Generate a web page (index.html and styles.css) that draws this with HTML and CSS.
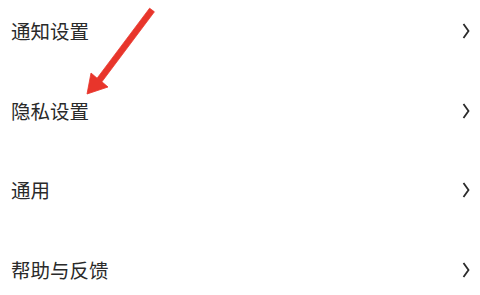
FILE: index.html
```html
<!DOCTYPE HTML>
<html>
<head>
<meta charset="utf-8">
<title>设置</title>
<link rel="stylesheet" href="styles.css">
</head>
<body>
<div id="list">
	<div class="row"><span class="label">通知设置</span><svg class="chev" width="8" height="16" viewBox="0 0 8 16"><path d="M1.5 1 L6.5 8 L1.5 15" fill="none" stroke="#2a2a2a" stroke-width="1.8"/></svg></div>
	<div class="row"><span class="label">隐私设置</span><svg class="chev" width="8" height="16" viewBox="0 0 8 16"><path d="M1.5 1 L6.5 8 L1.5 15" fill="none" stroke="#2a2a2a" stroke-width="1.8"/></svg></div>
	<div class="row"><span class="label">通用</span><svg class="chev" width="8" height="16" viewBox="0 0 8 16"><path d="M1.5 1 L6.5 8 L1.5 15" fill="none" stroke="#2a2a2a" stroke-width="1.8"/></svg></div>
	<div class="row"><span class="label">帮助与反馈</span><svg class="chev" width="8" height="16" viewBox="0 0 8 16"><path d="M1.5 1 L6.5 8 L1.5 15" fill="none" stroke="#2a2a2a" stroke-width="1.8"/></svg></div>
</div>
<svg id="arrow" width="480" height="295" viewBox="0 0 480 295">
	<path d="M149.6 8.2 L154.4 11.8 L101.9 81.8 L108 87 L87 94 L91 73 L97.1 78.2 Z" fill="#e8352b" stroke="#e8352b" stroke-width="0.8" stroke-linejoin="round"/>
</svg>
</body>
</html>
```

FILE: styles.css
```css
body {
	margin: 0px;
	padding: 0px;
	background: #ffffff;
	width: 480px;
	height: 295px;
	overflow: hidden;
}
#list {
	display: flex;
	flex-direction: column;
	gap: 59.7px;
	padding-top: 21px;
	padding-left: 11px;
	padding-right: 10px;
}
.row {
	display: flex;
	align-items: center;
	justify-content: space-between;
	height: 20px;
}
.label {
	font-family: "Noto Sans CJK SC", "Noto Sans", sans-serif;
	font-size: 19.5px;
	line-height: 20px;
	color: #2a2a2a;
}
#arrow {
	position: absolute;
	left: 0px;
	top: 0px;
}
```
